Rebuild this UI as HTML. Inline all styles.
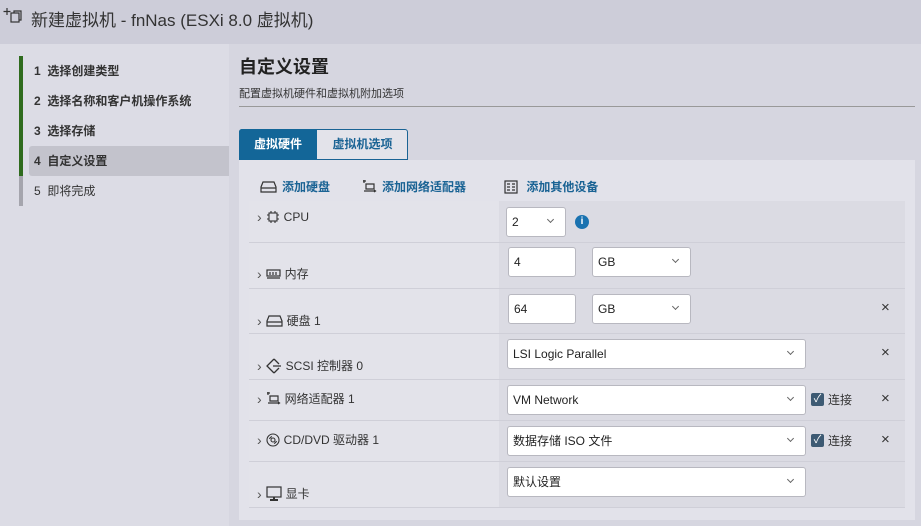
<!DOCTYPE html><html><head><meta charset="utf-8"><style>
*{box-sizing:border-box;margin:0;padding:0}
body{width:921px;height:526px;overflow:hidden;background:#d6d6e0;font-family:"Liberation Sans","Noto Sans CJK SC",sans-serif;color:#333;position:relative}
.a{position:absolute}
.hdr{left:0;top:0;width:921px;height:44px;background:#cdcdd9;font-size:17px;color:#333}
.left{left:0;top:44px;width:229px;height:482px;background:#dcdce5}
.step{position:absolute;left:23px;width:206px;height:30px;font-size:12px;line-height:30px;padding-left:11px;font-weight:bold;color:#333}
.bar{position:absolute;left:19px;width:4px}
.sel{background:#c3c3cc;border-radius:3px 0 0 3px;left:29px;padding-left:5px;width:200px}
.panel{left:239px;top:160px;width:676px;height:360px;background:#e2e2ea}
.tb{font-size:12px;color:#1a6394;font-weight:bold;top:178px;display:flex;align-items:center;gap:5px}
.row{position:absolute;left:249px;width:656px;border-bottom:1px solid #cfcfd8}
.lc{position:absolute;left:0;top:0;width:250px;height:100%;background:#e3e3ea}
.rc{position:absolute;left:250px;top:0;width:406px;height:100%;background:#dbdbe3}
.lab{position:absolute;left:8px;font-size:12px;color:#333;display:flex;align-items:center;gap:4px}
.inp{position:absolute;background:#fff;border:1px solid #b8b8c0;border-radius:3px;height:30px;font-size:12px;line-height:28px;padding-left:5px;color:#222}
.dd::after{content:"";position:absolute;right:12px;top:9px;width:4px;height:4px;border-right:1px solid #666;border-bottom:1px solid #666;transform:rotate(45deg)}
.x{position:absolute;left:632px;font-size:15px;color:#333}
.chk{position:absolute;left:562px;font-size:12px;display:flex;align-items:center;gap:4px}
.cb{width:13px;height:13px;background:#3d5a73;border-radius:2px;color:#fff;font-size:11px;line-height:13px;text-align:center}
.chev{font-size:14px;color:#555}
svg{display:block}
</style></head><body>
<div class="a hdr"><svg class="a" style="left:3px;top:7px" width="22" height="18" viewBox="0 0 22 18" fill="none" stroke="#333" stroke-width="1.2"><path d="M4 1v7M0.5 4.5h7"/><rect x="8" y="6" width="8" height="9"/><path d="M11 6V4h7v9h-2"/></svg><span class="a" style="left:31px;top:6px">新建虚拟机 - fnNas (ESXi 8.0 虚拟机)</span></div>
<div class="a left">
<div class="bar" style="top:12px;height:120px;background:#2f6b1e"></div>
<div class="bar" style="top:132px;height:30px;background:#a5a5ad"></div>
<div class="step" style="top:12px">1&nbsp;&nbsp;选择创建类型</div>
<div class="step" style="top:42px">2&nbsp;&nbsp;选择名称和客户机操作系统</div>
<div class="step" style="top:72px">3&nbsp;&nbsp;选择存储</div>
<div class="step sel" style="top:102px">4&nbsp;&nbsp;自定义设置</div>
<div class="step" style="top:132px;font-weight:normal">5&nbsp;&nbsp;即将完成</div>
</div>
<div class="a" style="left:239px;top:53px;font-size:18px;font-weight:bold;color:#222">自定义设置</div>
<div class="a" style="left:239px;top:85px;font-size:11px;color:#333">配置虚拟机硬件和虚拟机附加选项</div>
<div class="a" style="left:239px;top:106px;width:676px;height:1px;background:#999"></div>
<div class="a" style="left:239px;top:129px;width:169px;height:31px;border:1px solid #1a6394;border-radius:3px 3px 0 0;background:#e3e3ea"></div>
<div class="a" style="left:239px;top:129px;width:78px;height:31px;background:#136698;border-radius:3px 0 0 0;color:#fff;font-size:12px;font-weight:bold;line-height:30px;text-align:center">虚拟硬件</div>
<div class="a" style="left:317px;top:129px;width:91px;height:31px;color:#1a6394;font-size:12px;font-weight:bold;line-height:30px;text-align:center">虚拟机选项</div>
<div class="a panel"></div>
<div class="a tb" style="left:260px"><svg width="17" height="12" viewBox="0 0 17 12" fill="none" stroke="#333" stroke-width="1.2"><path d="M1 6L3 1h11l2 5v5H1z M1 7h15"/></svg>添加硬盘</div>
<div class="a tb" style="left:362px"><svg width="15" height="13" viewBox="0 0 15 13" fill="none" stroke="#333" stroke-width="1.2"><path d="M1 1h3M2 0v3M4 4h8v5H4zM2 11h11M12 10l1.5 1-1.5 1"/></svg>添加网络适配器</div>
<div class="a tb" style="left:504px"><svg width="14" height="14" viewBox="0 0 14 14" fill="none" stroke="#333" stroke-width="1.2"><rect x="1" y="1" width="12" height="12"/><path d="M3 4h3M3 7h3M3 10h3M8 4h3M8 7h3M8 10h3"/></svg>&nbsp;添加其他设备</div>

<div class="row" style="top:201px;height:42px"><div class="lc"></div><div class="rc"></div><div class="lab" style="top:8px"><span class="chev">›</span><svg width="14" height="14" viewBox="0 0 14 14" fill="none" stroke="#333" stroke-width="1.1"><rect x="3" y="3" width="8" height="8"/><path d="M5 1v2M9 1v2M5 11v2M9 11v2M1 5h2M1 9h2M11 5h2M11 9h2"/></svg>CPU</div>
<div class="inp dd" style="left:257px;top:6px;width:60px">2</div>
<div class="a" style="left:326px;top:14px;width:14px;height:14px;border-radius:50%;background:#1a72b0;color:#fff;font-size:10px;font-weight:bold;text-align:center;line-height:14px">i</div></div>

<div class="row" style="top:243px;height:46px"><div class="lc"></div><div class="rc"></div><div class="lab" style="top:22px"><span class="chev">›</span><svg width="15" height="10" viewBox="0 0 15 10" fill="none" stroke="#333" stroke-width="1.2"><rect x="1" y="1" width="13" height="6"/><path d="M4 3v3M7 3v3M10 3v3M1 9h13"/></svg>内存</div>
<div class="inp" style="left:259px;top:4px;width:68px">4</div><div class="inp dd" style="left:343px;top:4px;width:99px">GB</div></div>

<div class="row" style="top:289px;height:45px"><div class="lc"></div><div class="rc"></div><div class="lab" style="top:23px"><span class="chev">›</span><svg width="17" height="12" viewBox="0 0 17 12" fill="none" stroke="#333" stroke-width="1.2"><path d="M1 6L3 1h11l2 5v5H1z M1 7h15"/></svg>硬盘 1</div>
<div class="inp" style="left:259px;top:5px;width:68px">64</div><div class="inp dd" style="left:343px;top:5px;width:99px">GB</div><div class="x" style="top:10px">×</div></div>

<div class="row" style="top:334px;height:46px"><div class="lc"></div><div class="rc"></div><div class="lab" style="top:23px"><span class="chev">›</span><svg width="16" height="16" viewBox="0 0 16 16" fill="none" stroke="#333" stroke-width="1.3"><path d="M8 1L1 8l7 7M8 1l5 5M8 15l5-5M7 8h8"/></svg>SCSI 控制器 0</div>
<div class="inp dd" style="left:258px;top:5px;width:299px">LSI Logic Parallel</div><div class="x" style="top:10px">×</div></div>

<div class="row" style="top:380px;height:41px"><div class="lc"></div><div class="rc"></div><div class="lab" style="top:10px"><span class="chev">›</span><svg width="15" height="13" viewBox="0 0 15 13" fill="none" stroke="#333" stroke-width="1.2"><path d="M1 1h3M2 0v3M4 4h8v5H4zM2 11h11M12 10l1.5 1-1.5 1"/></svg>网络适配器 1</div>
<div class="inp dd" style="left:258px;top:5px;width:299px">VM Network</div><div class="chk" style="top:11px"><span class="cb">✓</span>连接</div><div class="x" style="top:10px">×</div></div>

<div class="row" style="top:421px;height:41px"><div class="lc"></div><div class="rc"></div><div class="lab" style="top:10px"><span class="chev">›</span><svg width="14" height="14" viewBox="0 0 14 14" fill="none" stroke="#333" stroke-width="1.1"><circle cx="7" cy="7" r="6"/><circle cx="7" cy="7" r="2"/><path d="M3.5 6a4 4 0 0 1 2.5-2.5M10.5 8a4 4 0 0 1-2.5 2.5"/></svg>CD/DVD 驱动器 1</div>
<div class="inp dd" style="left:258px;top:5px;width:299px">数据存储 ISO 文件</div><div class="chk" style="top:11px"><span class="cb">✓</span>连接</div><div class="x" style="top:10px">×</div></div>

<div class="row" style="top:462px;height:46px"><div class="lc"></div><div class="rc"></div><div class="lab" style="top:23px"><span class="chev">›</span><svg width="16" height="15" viewBox="0 0 16 15" fill="none" stroke="#333" stroke-width="1.2"><rect x="1" y="1" width="14" height="10"/><path d="M8 11v2M4 14h8" stroke-width="2"/></svg>显卡</div>
<div class="inp dd" style="left:258px;top:5px;width:299px">默认设置</div></div>
</body></html>
